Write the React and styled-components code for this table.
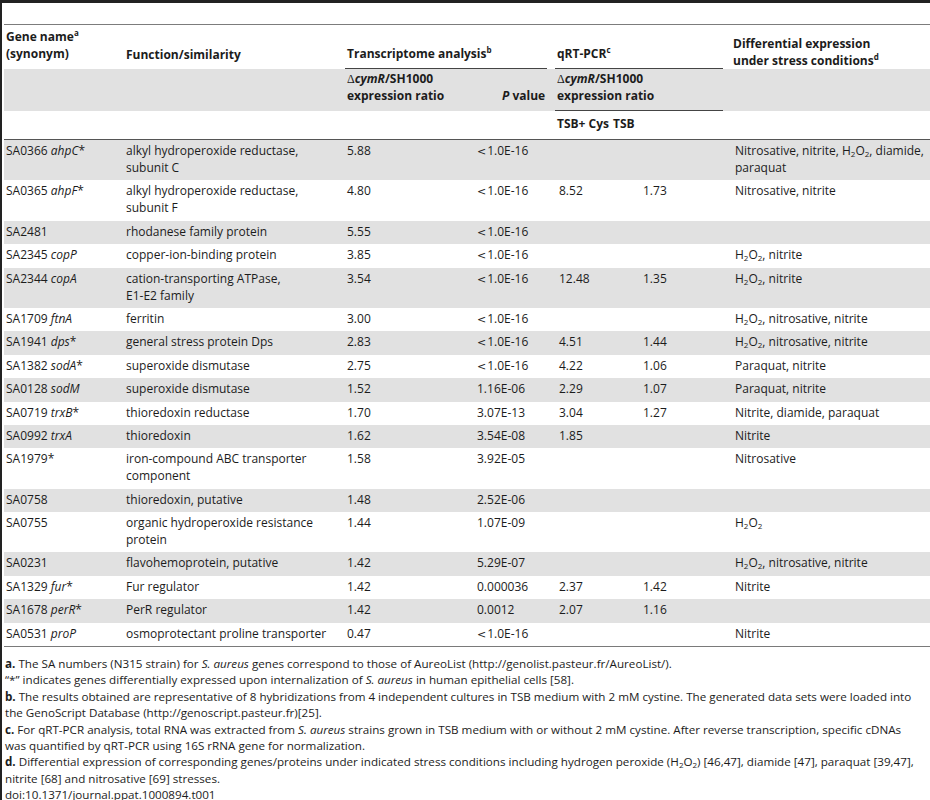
import React from 'react';
import styled, { createGlobalStyle } from 'styled-components';

const GlobalStyle = createGlobalStyle`
    html, body {
        margin: 0;
        padding: 0;
        background: #fff;
    }
    body {
        font-family: "Open Sans", "Liberation Sans", sans-serif;
        color: #1c1c1c;
    }
`;

const Frame = styled.div`
    box-sizing: border-box;
    min-height: 100vh;
    border-top: 3px solid #222;
    border-left: 2px solid #222;
    padding: 21px 0 0 2px;
`;

const Table = styled.table`
    width: 926px;
    table-layout: fixed;
    border-collapse: collapse;
    font-size: 12px;
    line-height: 17px;
    border-top: 1px solid #7c7c7c;
    border-bottom: 1px solid #7a7a7a;
`;

const HeadRow = styled.tr`
    background: ${p => (p.$shade ? '#e1e1e1' : 'transparent')};
    border-bottom: ${p => (p.$last ? '1px solid #555' : 'none')};
`;

const Th = styled.th`
    text-align: left;
    font-weight: 700;
    white-space: nowrap;
    vertical-align: ${p => p.$valign || 'top'};
    padding: ${p => p.$pad || '3px 2px 5px'};
`;

const Spanner = styled.div`
    margin-right: 8px;
    padding: ${p => p.$pad || '0 2px 6px'};
    border-bottom: 1px solid #444;
`;

const Row = styled.tr`
    background: ${p => (p.$shade ? '#e1e1e1' : 'transparent')};
`;

const Td = styled.td`
    vertical-align: top;
    white-space: pre-line;
    padding: 2px 2px 4.4px ${p => p.$pl || 2}px;
`;

const Sup = styled.sup`
    font-size: 8px;
    line-height: 0;
    vertical-align: 5px;
`;

const Sub = styled.sub`
    font-size: 8px;
    line-height: 0;
    vertical-align: -2px;
`;

const Delta = styled.span`
    font-family: "Liberation Serif", serif;
    font-weight: 400;
    line-height: 0;
`;

const Less = styled.span`
    font-family: "DejaVu Sans", sans-serif;
    font-size: 11px;
    line-height: 0;
    margin-right: 1px;
`;

const Notes = styled.div`
    margin-top: 9px;
    padding-left: 1px;
    font-size: 11.65px;
    line-height: 16.4px;
`;

const Note = styled.div`
    white-space: nowrap;
`;

const Label = styled.b`
    font-weight: 700;
`;

const rows = [
    { id: 'SA0366', gene: 'ahpC', star: true, fn: 'alkyl hydroperoxide reductase,\nsubunit C', ratio: '5.88', p: '<1.0E-16', cys: '', tsb: '', stress: 'Nitrosative, nitrite, H2O2, diamide,\nparaquat' },
    { id: 'SA0365', gene: 'ahpF', star: true, fn: 'alkyl hydroperoxide reductase,\nsubunit F', ratio: '4.80', p: '<1.0E-16', cys: '8.52', tsb: '1.73', stress: 'Nitrosative, nitrite' },
    { id: 'SA2481', gene: '', fn: 'rhodanese family protein', ratio: '5.55', p: '<1.0E-16', cys: '', tsb: '', stress: '' },
    { id: 'SA2345', gene: 'copP', fn: 'copper-ion-binding protein', ratio: '3.85', p: '<1.0E-16', cys: '', tsb: '', stress: 'H2O2, nitrite' },
    { id: 'SA2344', gene: 'copA', fn: 'cation-transporting ATPase,\nE1-E2 family', ratio: '3.54', p: '<1.0E-16', cys: '12.48', tsb: '1.35', stress: 'H2O2, nitrite' },
    { id: 'SA1709', gene: 'ftnA', fn: 'ferritin', ratio: '3.00', p: '<1.0E-16', cys: '', tsb: '', stress: 'H2O2, nitrosative, nitrite' },
    { id: 'SA1941', gene: 'dps', star: true, fn: 'general stress protein Dps', ratio: '2.83', p: '<1.0E-16', cys: '4.51', tsb: '1.44', stress: 'H2O2, nitrosative, nitrite' },
    { id: 'SA1382', gene: 'sodA', star: true, fn: 'superoxide dismutase', ratio: '2.75', p: '<1.0E-16', cys: '4.22', tsb: '1.06', stress: 'Paraquat, nitrite' },
    { id: 'SA0128', gene: 'sodM', fn: 'superoxide dismutase', ratio: '1.52', p: '1.16E-06', cys: '2.29', tsb: '1.07', stress: 'Paraquat, nitrite' },
    { id: 'SA0719', gene: 'trxB', star: true, fn: 'thioredoxin reductase', ratio: '1.70', p: '3.07E-13', cys: '3.04', tsb: '1.27', stress: 'Nitrite, diamide, paraquat' },
    { id: 'SA0992', gene: 'trxA', fn: 'thioredoxin', ratio: '1.62', p: '3.54E-08', cys: '1.85', tsb: '', stress: 'Nitrite' },
    { id: 'SA1979', gene: '', star: true, fn: 'iron-compound ABC transporter\ncomponent', ratio: '1.58', p: '3.92E-05', cys: '', tsb: '', stress: 'Nitrosative' },
    { id: 'SA0758', gene: '', fn: 'thioredoxin, putative', ratio: '1.48', p: '2.52E-06', cys: '', tsb: '', stress: '' },
    { id: 'SA0755', gene: '', fn: 'organic hydroperoxide resistance\nprotein', ratio: '1.44', p: '1.07E-09', cys: '', tsb: '', stress: 'H2O2' },
    { id: 'SA0231', gene: '', fn: 'flavohemoprotein, putative', ratio: '1.42', p: '5.29E-07', cys: '', tsb: '', stress: 'H2O2, nitrosative, nitrite' },
    { id: 'SA1329', gene: 'fur', star: true, fn: 'Fur regulator', ratio: '1.42', p: '0.000036', cys: '2.37', tsb: '1.42', stress: 'Nitrite' },
    { id: 'SA1678', gene: 'perR', star: true, fn: 'PerR regulator', ratio: '1.42', p: '0.0012', cys: '2.07', tsb: '1.16', stress: '' },
    { id: 'SA0531', gene: 'proP', fn: 'osmoprotectant proline transporter', ratio: '0.47', p: '<1.0E-16', cys: '', tsb: '', stress: 'Nitrite' },
];

const H2O2 = () => (
    <>H<Sub>2</Sub>O<Sub>2</Sub></>
);

// swaps every "H2O2" in a string for the subscripted formula
const Chem = ({ text }) => {
    const parts = text.split('H2O2');
    return parts.map((part, i) => (
        <React.Fragment key={i}>
            {part}
            {i < parts.length - 1 && <H2O2 />}
        </React.Fragment>
    ));
};

const PValue = ({ value }) =>
    value.startsWith('<') ? (
        <>
            <Less>&lt;</Less>
            {value.slice(1)}
        </>
    ) : (
        value
    );

const Ratio = () => (
    <>
        <Delta>Δ</Delta>
        <i>cymR</i>/SH1000
        <br />
        expression ratio
    </>
);

const App = () => (
    <Frame>
        <GlobalStyle />
        <Table>
            <colgroup>
                <col style={{ width: 120 }} />
                <col style={{ width: 221 }} />
                <col style={{ width: 130 }} />
                <col style={{ width: 80 }} />
                <col style={{ width: 56 }} />
                <col style={{ width: 120 }} />
                <col />
            </colgroup>
            <thead>
                <HeadRow>
                    <Th>
                        Gene name<Sup>a</Sup>
                        <br />
                        (synonym)
                    </Th>
                    <Th $valign="bottom" $pad="3px 2px 6px">
                        Function/similarity
                    </Th>
                    <Th colSpan={2} $valign="bottom" $pad="0">
                        <Spanner>
                            Transcriptome analysis<Sup>b</Sup>
                        </Spanner>
                    </Th>
                    <Th colSpan={2} $valign="bottom" $pad="0">
                        <Spanner>
                            qRT-PCR<Sup>c</Sup>
                        </Spanner>
                    </Th>
                    <Th $pad="10px 2px 0">
                        Differential expression
                        <br />
                        under stress conditions<Sup>d</Sup>
                    </Th>
                </HeadRow>
                <HeadRow $shade>
                    <Th />
                    <Th />
                    <Th $pad="1px 2px 6px">
                        <Ratio />
                    </Th>
                    <Th $valign="bottom" $pad="0 2px 7px 27px">
                        <i>P</i> value
                    </Th>
                    <Th colSpan={2} $pad="0">
                        <Spanner $pad="1px 2px 6px">
                            <Ratio />
                        </Spanner>
                    </Th>
                    <Th />
                </HeadRow>
                <HeadRow $last>
                    <Th $pad="4px 2px 7px" />
                    <Th $pad="4px 2px 7px" />
                    <Th $pad="4px 2px 7px" />
                    <Th $pad="4px 2px 7px" />
                    <Th $pad="4px 2px 7px">TSB+ Cys</Th>
                    <Th $pad="4px 2px 7px">TSB</Th>
                    <Th $pad="4px 2px 7px" />
                </HeadRow>
            </thead>
            <tbody>
                {rows.map((r, i) => (
                    <Row key={r.id} $shade={i % 2 === 0}>
                        <Td>
                            {r.id}
                            {r.gene && ' '}
                            {r.gene && <i>{r.gene}</i>}
                            {r.star && '*'}
                        </Td>
                        <Td>{r.fn}</Td>
                        <Td>{r.ratio}</Td>
                        <Td>
                            <PValue value={r.p} />
                        </Td>
                        <Td $pl={4}>{r.cys}</Td>
                        <Td $pl={32}>{r.tsb}</Td>
                        <Td $pl={4}>
                            <Chem text={r.stress} />
                        </Td>
                    </Row>
                ))}
            </tbody>
        </Table>
        <Notes>
            <Note>
                <Label>a.</Label> The SA numbers (N315 strain) for <i>S. aureus</i> genes correspond to those of AureoList (http://genolist.pasteur.fr/AureoList/).
            </Note>
            <Note>
                “*” indicates genes differentially expressed upon internalization of <i>S. aureus</i> in human epithelial cells [58].
            </Note>
            <Note>
                <Label>b.</Label> The results obtained are representative of 8 hybridizations from 4 independent cultures in TSB medium with 2 mM cystine. The generated data sets were loaded into
                <br />
                the GenoScript Database (http://genoscript.pasteur.fr)[25].
            </Note>
            <Note>
                <Label>c.</Label> For qRT-PCR analysis, total RNA was extracted from <i>S. aureus</i> strains grown in TSB medium with or without 2 mM cystine. After reverse transcription, specific cDNAs
                <br />
                was quantified by qRT-PCR using 16S rRNA gene for normalization.
            </Note>
            <Note>
                <Label>d.</Label> Differential expression of corresponding genes/proteins under indicated stress conditions including hydrogen peroxide (<H2O2 />) [46,47], diamide [47], paraquat [39,47],
                <br />
                nitrite [68] and nitrosative [69] stresses.
            </Note>
            <Note>doi:10.1371/journal.ppat.1000894.t001</Note>
        </Notes>
    </Frame>
);

export default App;
